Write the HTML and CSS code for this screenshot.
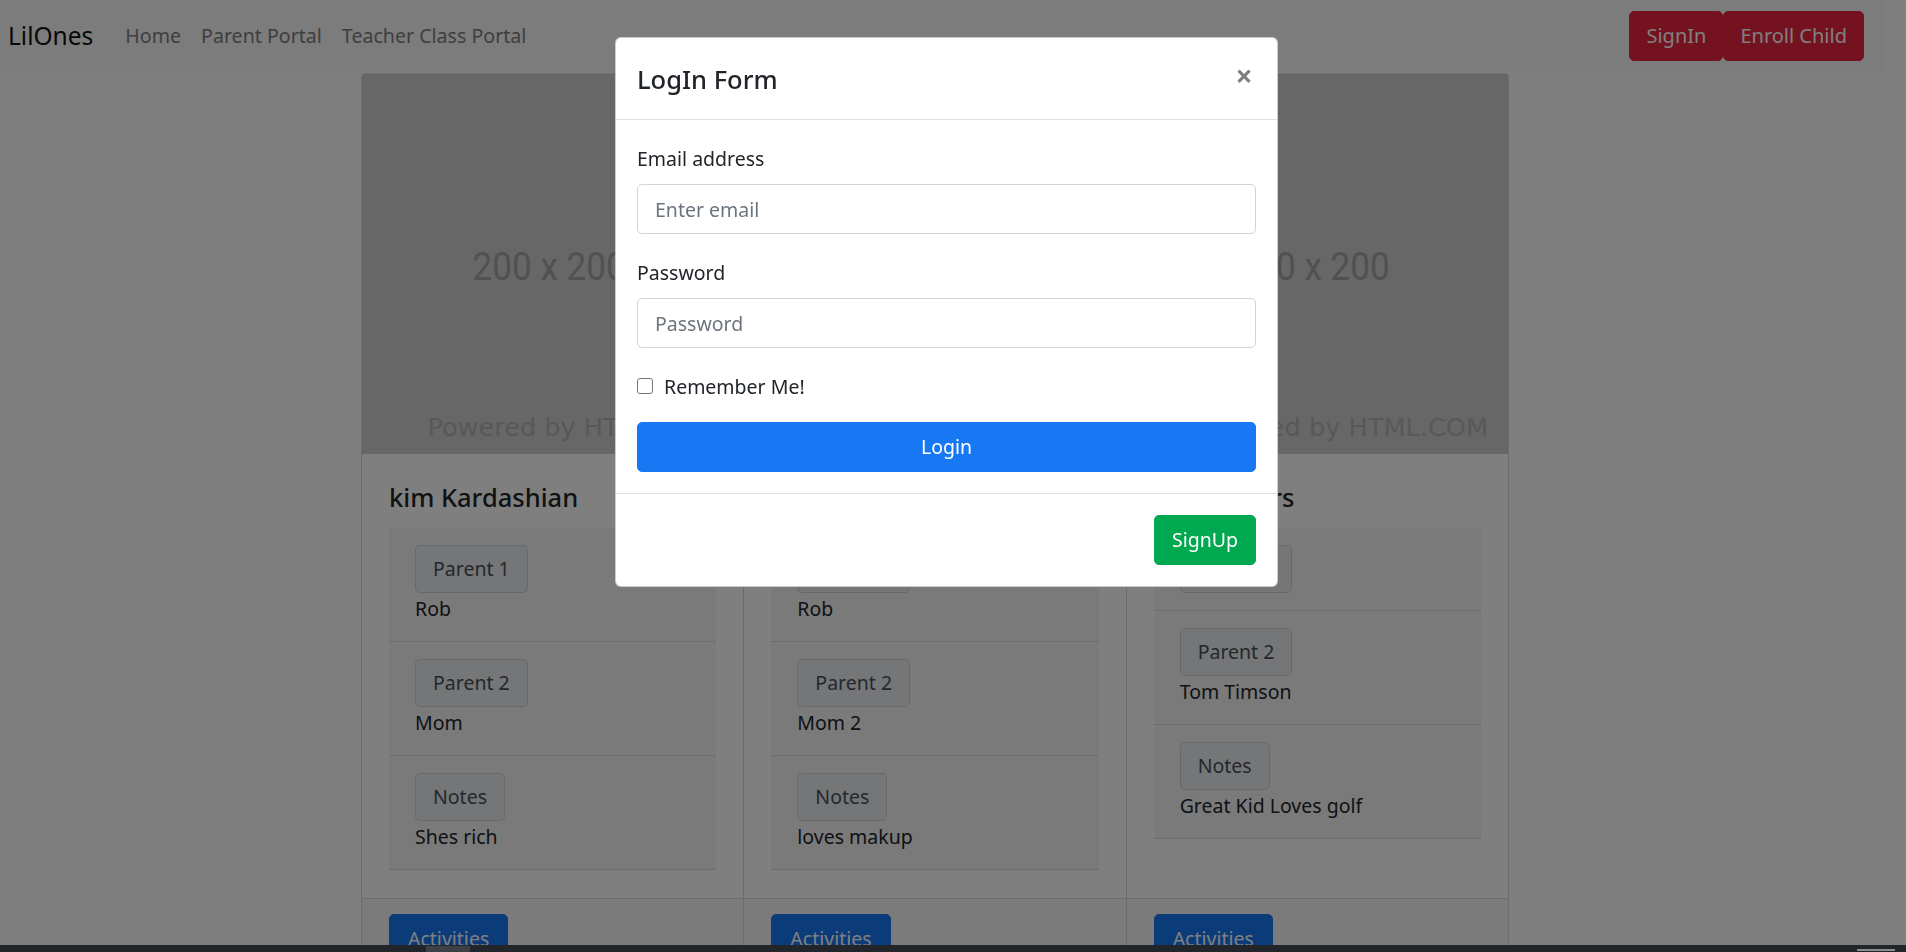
FILE: index.html
```html
<!DOCTYPE html>
<html lang="en">
<head>
<meta charset="utf-8">
<title>LilOnes</title>
<link rel="stylesheet" href="styles.css">
</head>
<body>
<nav class="navbar">
  <a class="brand" href="#">LilOnes</a>
  <ul class="nav-links">
    <li><a href="#">Home</a></li>
    <li><a href="#">Parent Portal</a></li>
    <li><a href="#">Teacher Class Portal</a></li>
  </ul>
  <div class="nav-actions">
    <button class="btn btn-red">SignIn</button>
    <button class="btn btn-red">Enroll Child</button>
  </div>
</nav>

<main class="card-group">
  <section class="card">
    <div class="card-img"><span class="ph-size">200 x 200</span><span class="ph-credit">Powered by HTML.COM</span></div>
    <div class="card-body">
      <h5 class="card-title">kim Kardashian</h5>
      <ul class="list">
        <li class="list-item"><span class="tag">Parent 1</span><p class="val">Rob</p></li>
        <li class="list-item"><span class="tag">Parent 2</span><p class="val">Mom</p></li>
        <li class="list-item"><span class="tag">Notes</span><p class="val">Shes rich</p></li>
      </ul>
    </div>
    <div class="card-footer"><button class="btn btn-blue">Activities</button></div>
  </section>
  <section class="card">
    <div class="card-img"><span class="ph-size">200 x 200</span><span class="ph-credit">Powered by HTML.COM</span></div>
    <div class="card-body">
      <h5 class="card-title">Khloe Kardashian</h5>
      <ul class="list">
        <li class="list-item"><span class="tag">Parent 1</span><p class="val">Rob</p></li>
        <li class="list-item"><span class="tag">Parent 2</span><p class="val">Mom 2</p></li>
        <li class="list-item"><span class="tag">Notes</span><p class="val">loves makup</p></li>
      </ul>
    </div>
    <div class="card-footer"><button class="btn btn-blue">Activities</button></div>
  </section>
  <section class="card">
    <div class="card-img"><span class="ph-size">200 x 200</span><span class="ph-credit">Powered by HTML.COM</span></div>
    <div class="card-body">
      <h5 class="card-title">Tim Tamers</h5>
      <ul class="list">
        <li class="list-item"><span class="tag">Parent 1</span></li>
        <li class="list-item"><span class="tag">Parent 2</span><p class="val">Tom Timson</p></li>
        <li class="list-item"><span class="tag">Notes</span><p class="val">Great Kid Loves golf</p></li>
      </ul>
    </div>
    <div class="card-footer"><button class="btn btn-blue">Activities</button></div>
  </section>
</main>

<div class="backdrop"></div>

<div class="modal-dialog">
  <div class="modal-content">
    <div class="modal-header">
      <h5 class="modal-title">LogIn Form</h5>
      <button class="close" aria-label="Close">&times;</button>
    </div>
    <form class="modal-body">
      <div class="form-group">
        <label class="label" for="email">Email address</label>
        <input class="input" id="email" type="email" placeholder="Enter email">
      </div>
      <div class="form-group">
        <label class="label" for="pw">Password</label>
        <input class="input" id="pw" type="password" placeholder="Password">
      </div>
      <div class="check-row">
        <input class="check" id="rem" type="checkbox">
        <label for="rem">Remember Me!</label>
      </div>
      <button class="btn btn-login" type="button">Login</button>
    </form>
    <div class="modal-footer">
      <button class="btn btn-green">SignUp</button>
    </div>
  </div>
</div>

<div class="taskbar"><span class="tb-app"></span><span class="tb-clock"></span></div>
</body>
</html>
```
FILE: styles.css
```css
* { box-sizing: border-box; }

html, body { height: 100%; }

body {
  margin: 0;
  padding-right: 21px;
  overflow: hidden;
  background: #ffffff;
  color: #212529;
  font-family: "Noto Sans", "Open Sans", sans-serif;
  font-size: 19.5px;
  line-height: 30px;
}

button { font-family: inherit; }

/* ---------- navbar ---------- */
.navbar {
  display: flex;
  align-items: center;
  height: 72px;
  padding: 0 21px 0 8px;
  background: #f8f9fa;
}

.brand {
  font-size: 24.5px;
  color: #111;
  text-decoration: none;
  margin-right: 22px;
}

.nav-links {
  display: flex;
  list-style: none;
  margin: 0;
  padding: 0;
}

.nav-links a {
  display: block;
  padding: 0 10px;
  color: #7c7d7e;
  text-decoration: none;
  font-size: 19.6px;
}

.nav-actions {
  display: flex;
  margin-left: auto;
}

.btn {
  border: 1px solid transparent;
  border-radius: 5px;
  font-size: 19.5px;
  line-height: 30px;
  color: #fff;
  cursor: pointer;
}

.btn-red {
  height: 50px;
  padding: 0 16px;
  font-size: 20px;
  background: #e8263f;
  border-color: #e8263f;
}

/* ---------- cards ---------- */
.card-group {
  display: flex;
  width: 1148px;
  margin: 1px 0 0 361px;
}

.card {
  flex: 1;
  min-width: 0;
  display: flex;
  flex-direction: column;
  background: #fff;
  border: 1px solid rgba(0, 0, 0, 0.14);
}

.card + .card { border-left: 0; }
.card:first-child { border-radius: 5px 0 0 5px; }
.card:last-child { border-radius: 0 5px 5px 0; }

.card-img {
  height: 380px;
  display: flex;
  flex-direction: column;
  align-items: center;
  padding-top: 172px;
  background: #cecece;
  overflow: hidden;
}

.ph-size {
  display: inline-block;
  font-family: Roboto, "Liberation Sans", sans-serif;
  font-size: 39px;
  line-height: 42px;
  color: #a2a2a2;
  transform: scaleX(0.9);
  margin-right: 8px;
}

.ph-credit {
  align-self: flex-end;
  margin: 124px 20px 0 0;
  font-family: "DejaVu Sans", Verdana, sans-serif;
  font-size: 25.6px;
  line-height: 30px;
  color: #b1b1b1;
  white-space: nowrap;
}

.card-body {
  flex: 1;
  padding: 28px 27px;
}

.card-title {
  margin: 0 0 15px;
  font-size: 25.5px;
  font-weight: 500;
  line-height: 31px;
  color: #212529;
}

.list {
  list-style: none;
  margin: 0;
  padding: 0;
}

.list-item {
  padding: 17px 26px 17px;
  background: #f4f4f4;
  border-bottom: 1px solid rgba(0, 0, 0, 0.1);
}

.tag {
  display: inline-flex;
  align-items: center;
  height: 48px;
  padding: 0 17px;
  background: #e9ecef;
  border: 1px solid #ced4da;
  border-radius: 5px;
  color: #495057;
}

.val {
  margin: 0;
  line-height: 31px;
}

.card-footer {
  padding: 15px 27px;
  background: #f7f7f7;
  border-top: 1px solid rgba(0, 0, 0, 0.12);
}

.btn-blue {
  height: 50px;
  padding: 0 18px;
  background: #1877f2;
  border-color: #1877f2;
}

/* ---------- modal ---------- */
.backdrop {
  position: fixed;
  inset: 0;
  background: rgba(0, 0, 0, 0.5);
  z-index: 10;
}

.modal-dialog {
  position: fixed;
  top: 37px;
  left: 615px;
  width: 663px;
  z-index: 20;
}

.modal-content {
  background: #fff;
  border: 1px solid rgba(0, 0, 0, 0.2);
  border-radius: 6px;
}

.modal-header {
  display: flex;
  align-items: center;
  justify-content: space-between;
  height: 82px;
  padding: 0 21px 0;
  border-bottom: 1px solid #dee2e6;
}

.modal-title {
  margin: 0;
  font-size: 25.5px;
  font-weight: 500;
  line-height: 38px;
  color: #212529;
}

.close {
  padding: 0;
  margin: -5px 0 0;
  background: none;
  border: 0;
  font-size: 30px;
  font-weight: 700;
  line-height: 30px;
  color: #000;
  opacity: 0.5;
  width: 24px;
}

.modal-body {
  padding: 24px 21px 21px;
}

.form-group { margin-bottom: 24px; }

.label {
  display: block;
  margin-bottom: 10px;
}

.input {
  display: block;
  width: 100%;
  height: 50px;
  padding: 0 17px;
  border: 1px solid #ced4da;
  border-radius: 5px;
  font-family: inherit;
  font-size: 19.5px;
  color: #495057;
  background: #fff;
}

.input::placeholder { color: #6c757d; }

.check-row {
  display: flex;
  align-items: center;
  height: 30px;
  margin-bottom: 20px;
}

.check {
  appearance: none;
  width: 16px;
  height: 16px;
  margin: -3px 11px 0 0;
  border: 1px solid #767676;
  border-radius: 3px;
  background: #fff;
}

.btn-login {
  display: block;
  width: 100%;
  height: 50px;
  background: #1877f2;
  border-color: #1877f2;
}

.modal-footer {
  display: flex;
  justify-content: flex-end;
  padding: 21px;
  border-top: 1px solid #dee2e6;
}

.btn-green {
  height: 50px;
  padding: 0 17px;
  background: #00a84f;
  border-color: #00a84f;
}

/* ---------- OS taskbar strip ---------- */
.taskbar {
  position: fixed;
  left: 0;
  right: 0;
  bottom: 0;
  height: 7px;
  background: #22262a;
  z-index: 30;
}

.tb-app {
  position: absolute;
  left: 426px;
  top: 1px;
  width: 44px;
  height: 6px;
  background: #3d4146;
}

.tb-clock {
  position: absolute;
  left: 1857px;
  top: 4px;
  width: 38px;
  height: 2px;
  background: #8a8c8e;
}
```
